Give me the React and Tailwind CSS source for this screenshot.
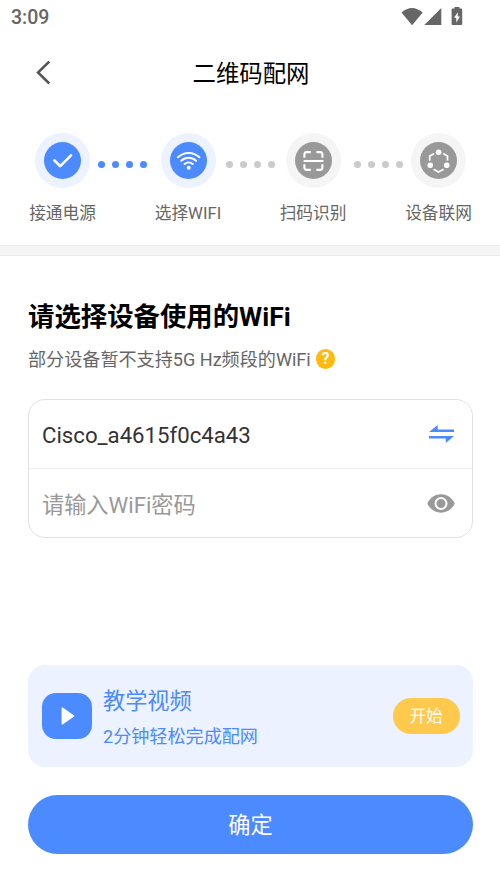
const CheckIcon = () => (
    <svg width="37" height="37" viewBox="0 0 37 37" fill="none" stroke="white" strokeWidth="2.6" strokeLinecap="round" strokeLinejoin="round">
        <path d="M10.3 18.3 L16.3 24.2 L27 13.3" />
    </svg>
)

const WifiIcon = () => (
    <svg width="37" height="37" viewBox="0 0 37 37" fill="none" stroke="white" strokeWidth="2" strokeLinecap="round">
        <path d="M7.9 15.3 C14 9.4 23.3 9.4 29.4 15.3" />
        <path d="M11.3 18.7 C15.5 14.7 21.8 14.7 26 18.7" />
        <path d="M14.6 22 C16.9 19.9 20.4 19.9 22.7 22" />
        <circle cx="18.7" cy="25.8" r="2" fill="white" stroke="none" />
    </svg>
)

const ScanIcon = () => (
    <svg width="37" height="37" viewBox="0 0 37 37" fill="none" stroke="white" strokeWidth="2.1">
        <path d="M9.4 15.8 V12.4 Q9.4 10.1 11.7 10.1 H15.8" />
        <path d="M21.4 10.1 H25.1 Q27.4 10.1 27.4 12.4 V15.8" />
        <path d="M9.4 22.2 V25.6 Q9.4 27.9 11.7 27.9 H15.8" />
        <path d="M21.4 27.9 H25.1 Q27.4 27.9 27.4 25.6 V22.2" />
        <path d="M8.6 19 H28.4" />
    </svg>
)

const NetworkIcon = () => (
    <svg width="37" height="37" viewBox="0 0 37 37" fill="none" stroke="white" strokeWidth="1.7" strokeLinecap="round" strokeLinejoin="round">
        <path d="M13.4 11.9 L9.7 14 V18" />
        <path d="M23.8 11.9 L27.5 14 V18" />
        <path d="M14.1 27.6 L18.6 30.1 L23.1 27.6" />
        <g fill="white" stroke="none">
            <circle cx="18.6" cy="10.2" r="2.8" />
            <circle cx="10.3" cy="23.3" r="2.8" />
            <circle cx="26.7" cy="23.3" r="2.8" />
        </g>
    </svg>
)

const Step = ({ label, active, children }) => (
    <div className="flex w-[68px] flex-col items-center">
        <div className={`flex size-[55px] items-center justify-center rounded-full ${active ? "bg-[#ecf2ff]" : "bg-[#f5f5f5]"}`}>
            <div className={`size-[37px] rounded-full ${active ? "bg-[#4b8aff]" : "bg-[#999999]"}`}>{children}</div>
        </div>
        <p className="mt-3.5 text-[16.7px] leading-6 whitespace-nowrap text-[#666]">{label}</p>
    </div>
)

const Dots = ({ color, className }) => (
    <div className={`mt-7 flex h-[7px] justify-between w-[49px] ${className}`}>
        {[0, 1, 2, 3].map((i) => (
            <span key={i} className={`size-[7px] rounded-full ${color}`} />
        ))}
    </div>
)

const StatusBar = () => (
    <div className="flex h-[34px] items-center justify-between pl-[11px] pr-[37px] text-[#666]">
        <span className="pt-0.5 text-[19.5px] leading-6 font-medium">3:09</span>
        <svg width="62" height="20" viewBox="0 0 62 20" fill="currentColor">
            <path d="M0.5 5.6 Q11 -3.6 21.7 5.6 L11.1 18.2 Z" />
            <path d="M40.3 1 V18 H23.3 Z" />
            <path d="M53.5 0 H58.5 V1.5 H60.2 Q61.2 1.5 61.2 2.5 V17 Q61.2 18 60.2 18 H51.6 Q50.6 18 50.6 17 V2.5 Q50.6 1.5 51.6 1.5 H53.5 Z" />
            <path d="M56.8 5.2 L53 10.8 H55.3 V15.4 L59 9.4 H56.8 Z" fill="white" />
        </svg>
    </div>
)

const App = () => {
    return (
        <div className="flex h-[889px] w-[500px] flex-col bg-white font-['Roboto','Noto_Sans_CJK_SC',sans-serif]">
            <StatusBar />

            <header className="flex h-[77px] items-center pl-[35px] pr-[35px]">
                <button className="flex w-6">
                    <svg width="16" height="24" viewBox="0 0 16 24" fill="none" stroke="#555" strokeWidth="2.5">
                        <path d="M14.3 0.5 L3 11.5 L14.3 22.5" />
                    </svg>
                </button>
                <h1 className="flex-1 pt-0.5 pl-0.5 text-center text-[23.4px] leading-8 text-black">二维码配网</h1>
                <div className="w-6" />
            </header>

            <section className="flex h-[134px] items-start pl-[28.5px] pt-[22px]">
                <Step label="接通电源" active><CheckIcon /></Step>
                <Dots color="bg-[#4b8aff]" className="ml-[1.5px] mr-[7px]" />
                <Step label="选择WIFI" active><WifiIcon /></Step>
                <Dots color="bg-[#cbcbcb]" className="mx-[4px]" />
                <Step label="扫码识别"><ScanIcon /></Step>
                <Dots color="bg-[#cbcbcb]" className="ml-[6.5px] mr-[2px]" />
                <Step label="设备联网"><NetworkIcon /></Step>
            </section>

            <div className="h-[11px] border-y border-[#ececec] bg-[#f5f5f5]" />

            <main className="flex flex-1 flex-col pl-7 pr-[27px]">
                <h2 className="mt-[41px] text-[26.4px] leading-10 font-bold text-black">请选择设备使用的WiFi</h2>
                <div className="mt-[10px] flex items-center gap-[5px]">
                    <p className="pt-0.5 text-[18.1px] leading-[22px] text-[#666]">部分设备暂不支持5G Hz频段的WiFi</p>
                    <span className="flex size-[19.5px] items-center justify-center rounded-full bg-[#ffb90f] text-base leading-none font-bold text-white">?</span>
                </div>

                <div className="mt-7 flex h-[139px] flex-col rounded-[17px] border-[1.5px] border-[#e2e2e2]">
                    <div className="flex h-[69px] items-center justify-between border-b border-[#eee] pl-[13px] pr-[18px]">
                        <span className="pt-0.5 text-[22.2px] leading-8 text-[#333]">Cisco_a4615f0c4a43</span>
                        <svg width="25" height="18" viewBox="0 0 25 18" fill="#4b8aff">
                            <path d="M0 7 L8.7 0 V4.6 H25 V7 Z" />
                            <path d="M0 11 H25 L16.8 18 V13.4 H0 Z" />
                        </svg>
                    </div>
                    <div className="flex flex-1 items-center justify-between pl-[13px] pr-[17px]">
                        <span className="pt-1 text-[22.2px] leading-8 text-[#999]">请输入WiFi密码</span>
                        <svg width="28" height="19" viewBox="0 0 28 19">
                            <path d="M0.3 9.5 C6 -2.7 22 -2.7 27.7 9.5 C22 21.7 6 21.7 0.3 9.5 Z" fill="#999" />
                            <circle cx="14" cy="9.5" r="5.5" fill="#999" stroke="white" strokeWidth="2" />
                        </svg>
                    </div>
                </div>

                <div className="mt-[127px] flex h-[102px] items-center rounded-[17px] bg-[#ecf2ff] pl-3.5 pr-[13.5px]">
                    <div className="flex h-[46px] w-[50px] items-center justify-center rounded-[14px] bg-[#4b8aff]">
                        <svg width="14" height="18" viewBox="0 0 14 18" fill="white" stroke="white" strokeWidth="1.5" strokeLinejoin="round" className="ml-0.5">
                            <path d="M1.3 1.2 L12.6 9 L1.3 16.8 Z" />
                        </svg>
                    </div>
                    <div className="ml-[11px] flex-1 pt-[5px] text-[#4b8aff]">
                        <p className="text-[22.2px] leading-9">教学视频</p>
                        <p className="text-[18.1px] leading-9">2分钟轻松完成配网</p>
                    </div>
                    <button className="h-9 w-[67px] rounded-full bg-[#ffc94d] pt-0.5 text-[16.6px] text-white">开始</button>
                </div>

                <button className="mt-7 h-[59px] rounded-full bg-[#4b8aff] pt-0.5 text-[22.2px] text-white">确定</button>
            </main>
        </div>
    )
}

export default App
